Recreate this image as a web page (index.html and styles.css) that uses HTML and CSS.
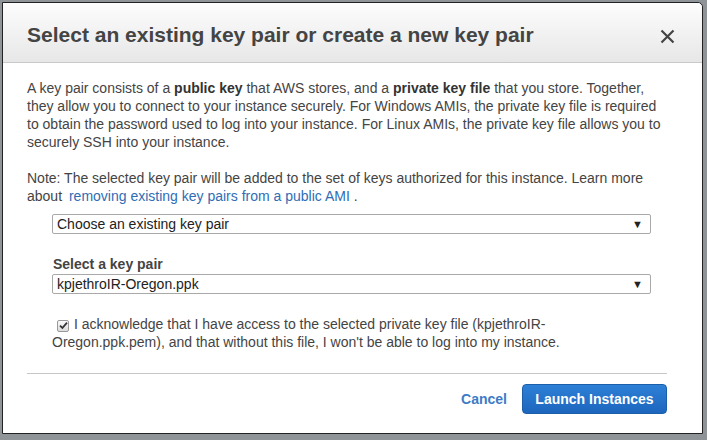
FILE: index.html
```html
<html>

<head>
    <title>Key pair</title>
    <link rel="stylesheet" href="styles.css">
</head>

<body>
    <div class="dialog">
        <div class="dialogHead">
            <h2 class="dialogTitle">Select an existing key pair or create a new key pair</h2>
            <svg class="closeIcon" width="15" height="15" viewBox="0 0 15 15">
                <path d="M1.5 1.5 L13.5 13.5 M13.5 1.5 L1.5 13.5" stroke="#444" stroke-width="2.2" fill="none" />
            </svg>
        </div>

        <div class="dialogBody">
            <p>
                A key pair consists of a <b>public key</b> that AWS stores, and a <b>private key file</b> that you store. Together,
                they allow you to connect to your instance securely. For Windows AMIs, the private key file is required
                to obtain the password used to log into your instance. For Linux AMIs, the private key file allows you to
                securely SSH into your instance.
            </p>
            <p>
                Note: The selected key pair will be added to the set of keys authorized for this instance. Learn more
                about <a class="link" href="#">removing existing key pairs from a public AMI</a> .
            </p>

            <div class="form">
                <div class="selectBox">
                    <span>Choose an existing key pair</span>
                    <span class="arrow">&#9660;</span>
                </div>

                <div class="fieldLabel">Select a key pair</div>
                <div class="selectBox">
                    <span>kpjethroIR-Oregon.ppk</span>
                    <span class="arrow">&#9660;</span>
                </div>

                <div class="ack">
                    <span class="checkBox">
                        <svg width="9" height="9" viewBox="0 0 9 9">
                            <path d="M1 4.6 L3.4 7 L8 1.6" stroke="#333" stroke-width="1.8" fill="none" />
                        </svg>
                    </span>
                    I acknowledge that I have access to the selected private key file (kpjethroIR-Oregon.ppk.pem), and that without this file, I won't be able to log into my instance.
                </div>
            </div>
        </div>

        <div class="dialogFoot">
            <a class="cancel" href="#">Cancel</a>
            <button class="launchBtn">Launch Instances</button>
        </div>
    </div>
</body>

</html>
```

FILE: styles.css
```css
body {
    margin: 0;
    background: #8f9499;
    font-family: "Liberation Sans", Arial, sans-serif;
    color: #444;
    overflow: hidden;
}

.dialog {
    margin: 2px 0 0 2px;
    width: 699px;
    height: 430px;
    background: #fff;
    border: 1px solid #222;
    border-radius: 0 5px 0 0;
}

.dialogHead {
    height: 59px;
    display: flex;
    align-items: center;
    justify-content: space-between;
    padding: 0 27px 0 24px;
    border-bottom: 1px solid #c9c9c9;
    border-radius: 0 5px 0 0;
    background: linear-gradient(#fdfdfd, #e7e7e7);
}

.dialogTitle {
    margin: 0;
    font-size: 21px;
    font-weight: bold;
    color: #444;
    padding-top: 5px;
}

.closeIcon {
    display: block;
    margin-top: 8px;
}

.dialogBody {
    padding: 16px 35px 0 24px;
    font-size: 14px;
    line-height: 18px;
}

.dialogBody p {
    margin: 0 0 18px 0;
}

.dialogBody p b {
    color: #333;
}

.link {
    color: #2f6db5;
    text-decoration: none;
    margin-left: 3px;
}

.form {
    margin: -9px 0 0 25px;
    width: 599px;
}

.selectBox {
    height: 18px;
    border: 1px solid #a9a9a9;
    border-radius: 2px;
    display: flex;
    align-items: center;
    justify-content: space-between;
    padding: 0 7px 0 4px;
    color: #222;
}

.arrow {
    font-size: 11px;
    color: #222;
}

.fieldLabel {
    margin: 21px 0 1px 1px;
    font-weight: bold;
    color: #444;
}

.ack {
    margin-top: 21px;
    color: #444;
}

.checkBox {
    display: inline-flex;
    align-items: center;
    justify-content: center;
    width: 10px;
    height: 10px;
    border: 1px solid #999;
    border-radius: 2px;
    background: linear-gradient(#fafafa, #dcdcdc);
    margin: 0 1px 0 5px;
    vertical-align: -1px;
}

.dialogFoot {
    margin: 22px 35px 0 24px;
    padding-top: 10px;
    border-top: 1px solid #c6c6c6;
    display: flex;
    justify-content: flex-end;
    align-items: center;
}

.cancel {
    font-size: 14px;
    font-weight: bold;
    color: #3d7bc6;
    text-decoration: none;
    margin-right: 15px;
}

.launchBtn {
    width: 145px;
    height: 30px;
    border: 1px solid #1c5ea8;
    border-radius: 4px;
    background: linear-gradient(#2d80d6, #1d66be);
    color: #fff;
    font-family: "Liberation Sans", Arial, sans-serif;
    font-size: 14px;
    font-weight: bold;
    padding: 0;
}
```
